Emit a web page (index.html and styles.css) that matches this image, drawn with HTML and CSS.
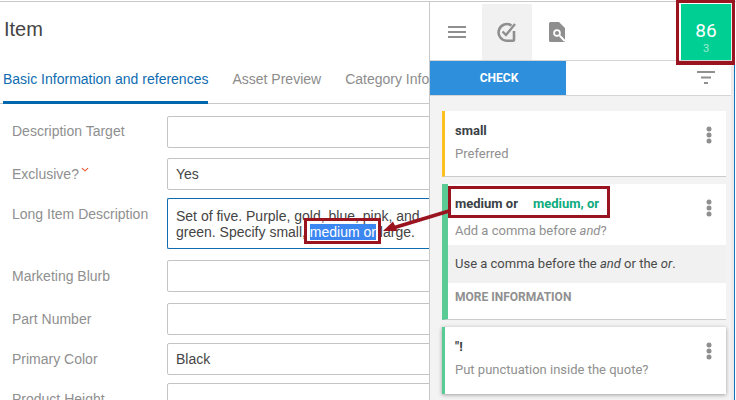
FILE: index.html
```html
<!DOCTYPE html>
<html lang="en">
<head>
<meta charset="utf-8">
<title>Item</title>
<link rel="stylesheet" href="styles.css">
</head>
<body>
<div class="app">
  <main class="left">
    <h1 class="title">Item</h1>
    <nav class="tabs">
      <span class="tab active">Basic Information and references</span>
      <span class="tab">Asset Preview</span>
      <span class="tab">Category Information</span>
    </nav>
    <div class="form">
      <div class="row r1"><span class="lbl">Description Target</span><div class="inp"></div></div>
      <div class="row r2"><span class="lbl">Exclusive?<svg class="req" width="8" height="5" viewBox="0 0 9 5"><path d="M1 1l3.500 3L8 1" stroke="#e8552d" stroke-width="1.300" fill="none"/></svg></span><div class="inp">Yes</div></div>
      <div class="row r3"><span class="lbl">Long Item Description</span><div class="inp focus">Set of five. Purple, gold, blue, pink, and green. Specify small, <mark class="sel">medium or</mark> large.</div></div>
      <div class="row r4"><span class="lbl">Marketing Blurb</span><div class="inp"></div></div>
      <div class="row r5"><span class="lbl">Part Number</span><div class="inp"></div></div>
      <div class="row r6"><span class="lbl">Primary Color</span><div class="inp">Black</div></div>
      <div class="row r7"><span class="lbl">Product Height</span><div class="inp"></div></div>
    </div>
  </main>
  <aside class="panel">
    <header class="phead">
      <button class="ic" aria-label="Menu"><svg width="18" height="12" viewBox="0 0 18 12"><path d="M0 1h18M0 6h18M0 11h18" stroke="#8f8f8f" stroke-width="2" fill="none"/></svg></button>
      <button class="ic on" aria-label="Check"><svg width="21" height="20" viewBox="0 0 21 20"><path d="M17 9V17.500a1.200 1.200 0 0 1-1.200 1.200H9.500A8.300 8.300 0 1 1 14.500 3.500" stroke="#8f8f8f" stroke-width="2.600" fill="none"/><path d="M5.500 9.500l3.500 3.500 9-11" stroke="#8f8f8f" stroke-width="2.400" fill="none"/></svg></button>
      <button class="ic" aria-label="Document search"><svg width="16" height="20" viewBox="0 0 16 20"><path d="M1.500 0H10L16 6V18.500a1.500 1.500 0 0 1-1.500 1.500H1.500A1.500 1.500 0 0 1 0 18.500V1.500A1.500 1.500 0 0 1 1.500 0Z" fill="#8f8f8f"/><circle cx="8" cy="11" r="3.800" fill="#fff"/><circle cx="8" cy="11" r="2.100" fill="#8f8f8f"/><path d="M10.800 13.800l4.700 5" stroke="#fff" stroke-width="2"/></svg></button>
      <div class="score"><span class="num">86</span><span class="sub">3</span></div>
    </header>
    <div class="bar">
      <span class="check">CHECK</span>
      <svg class="filter" width="18" height="14" viewBox="0 0 18 14"><path d="M0 1h18M4 6.500h10M7 12h4" stroke="#8f8f8f" stroke-width="2" fill="none"/></svg>
    </div>
    <div class="cards">
      <article class="card c-yellow">
        <div class="head"><b class="word">small</b><span class="dots"></span></div>
        <p class="hint">Preferred</p>
      </article>
      <article class="card c-open">
        <div class="head"><b class="word">medium or</b><b class="fix">medium, or</b><span class="dots"></span></div>
        <p class="hint">Add a comma before <i>and</i>?</p>
        <p class="detail">Use a comma before the <i>and</i> or the <i>or</i>.</p>
        <div class="more">MORE INFORMATION</div>
      </article>
      <article class="card c-green">
        <div class="head"><b class="word">"!</b><span class="dots"></span></div>
        <p class="hint">Put punctuation inside the quote?</p>
      </article>
    </div>
  </aside>
  <div class="mark m-score"></div>
  <div class="mark m-word"></div>
  <div class="mark m-sel"></div>
  <svg class="arrow" width="80" height="50" viewBox="0 0 80 50"><path d="M69 5L13 22" stroke="#9a1420" stroke-width="3.600" fill="none"/><path d="M3 25L13 15.500 17.500 25Z" fill="#9a1420"/></svg>
</div>
</body>
</html>
```
FILE: styles.css
```css
* { box-sizing: border-box; }
html, body { margin: 0; padding: 0; }
body { width: 736px; height: 400px; overflow: hidden; background: #fff; font-family: "Liberation Sans", Arial, sans-serif; }
.app { position: relative; display: flex; width: 736px; height: 399px; margin-top: 1px; border-top: 1px solid #c8c8c8; }
.left { width: 430px; flex: none; border-right: 1px solid #c8c8c8; overflow: hidden; }
.title { margin: 0; padding-left: 4px; height: 54px; font-size: 20px; line-height: 54px; font-weight: 400; color: #444; }
.tabs { display: flex; height: 48px; gap: 24px; padding-left: 3px; border-bottom: 1px solid #c8c8c8; white-space: nowrap; }
.tab { height: 48px; font-size: 14px; line-height: 46px; color: #8c8c8c; }
.tab.active { color: #0f6cb0; border-bottom: 3px solid #0067ac; }
.form { padding-top: 12px; }
.row { display: flex; }
.lbl { width: 167px; flex: none; padding-left: 12px; font-size: 14px; color: #8f8f8f; line-height: 32px; }
.r1 .lbl { line-height: 30px; }
.inp { width: 300px; flex: none; border: 1px solid #c4c4c4; border-radius: 2px; padding: 0 8px; font-size: 14px; line-height: 30px; color: #444; }
.r1 .inp, .r2 .inp, .r4 .inp, .r5 .inp, .r6 .inp, .r7 .inp { height: 32px; }
.r1 { margin-bottom: 10px; }
.r2 { margin-bottom: 8px; }
.r3 { margin-bottom: 11px; }
.r4 { margin-bottom: 11px; }
.r5 { margin-bottom: 8px; }
.r6 { margin-bottom: 8px; }
.r3 .inp { height: 51px; border-color: #0f6cb0; line-height: 16px; padding: 9px 0 0 8px; width: 262px; border-right: 0; border-radius: 2px 0 0 2px; }
.req { vertical-align: 7px; margin-left: 2px; }
.sel { background: #3b86f0; color: #fff; }
.panel { flex: none; width: 304px; display: flex; flex-direction: column; min-width: 0; background: #f3f3f3; border-right: 3px solid #ececec; box-shadow: 1px 0 0 #1273bd; }
.phead { display: flex; height: 59px; background: #fff; border-bottom: 1px solid #d5d5d5; padding-top: 2px; }
.ic { width: 50px; height: 56px; padding: 0; border: 0; background: none; display: flex; align-items: center; justify-content: center; }
.ic:first-child { margin-left: 2px; }
.ic.on { background: #f1f1f1; }
.score { margin-left: auto; width: 50px; height: 56px; background: #00cf93; color: #fff; display: flex; flex-direction: column; align-items: center; padding-top: 17px; font-family: Roboto, sans-serif; }
.num { font-size: 19px; line-height: 20px; }
.sub { font-size: 11px; line-height: 16px; opacity: .6; }
.bar { display: flex; justify-content: space-between; align-items: center; height: 35px; background: #fff; border-bottom: 1px solid #d5d5d5; flex: none; padding-right: 16px; }
.check { width: 136px; height: 34px; padding-left: 2px; background: #2e90dc; color: #fff; font: 700 12px/34px Roboto, sans-serif; text-align: center; }
.cards { padding: 15px 5px 0 12px; display: flex; flex-direction: column; gap: 7px; font-family: Roboto, sans-serif; }
.card { background: #fff; border-left: 3px solid #5acb95; border-bottom: 1px solid #ccc; position: relative; }
.c-yellow { height: 66px; border-left-color: #fdc11f; }
.c-open { height: 136px; border-left-width: 6px; }
.c-green { height: 67px; border-bottom: 0; box-shadow: 0 1px 4px rgba(0,0,0,.35); }
.head { display: flex; height: 36px; padding: 12px 0 0 10px; font-size: 13px; line-height: 16px; }
.c-open .head { padding-left: 7px; }
.word { color: #3b3f46; font-weight: 700; }
.fix { color: #0cab80; font-weight: 700; margin-left: 15px; }
.dots { position: absolute; right: 15px; top: 22px; width: 4px; height: 4px; border-radius: 50%; background: #8f8f8f; box-shadow: 0 -6px 0 .5px #8f8f8f, 0 0 0 .5px #8f8f8f, 0 6px 0 .5px #8f8f8f; }
.hint { margin: 0; padding-left: 10px; font-size: 13px; line-height: 14px; color: #909090; }
.c-open .hint { padding: 4px 0 0 7px; height: 25px; }
.detail { margin: 0; height: 38px; background: #f1f1f1; padding: 11px 0 0 7px; font-size: 13px; line-height: 16px; color: #4a4a4a; }
.more { padding: 6px 0 0 7px; font-size: 12px; line-height: 16px; font-weight: 700; color: #909090; }
.mark { position: absolute; border: 3px solid #9a1420; pointer-events: none; }
.m-score { left: 676px; top: -2px; width: 59px; height: 65px; border-bottom-width: 4px; }
.m-word { left: 448px; top: 184px; width: 162px; height: 32px; }
.m-sel { left: 304px; top: 216px; width: 77px; height: 26px; }
.arrow { position: absolute; left: 380px; top: 204px; }
```
